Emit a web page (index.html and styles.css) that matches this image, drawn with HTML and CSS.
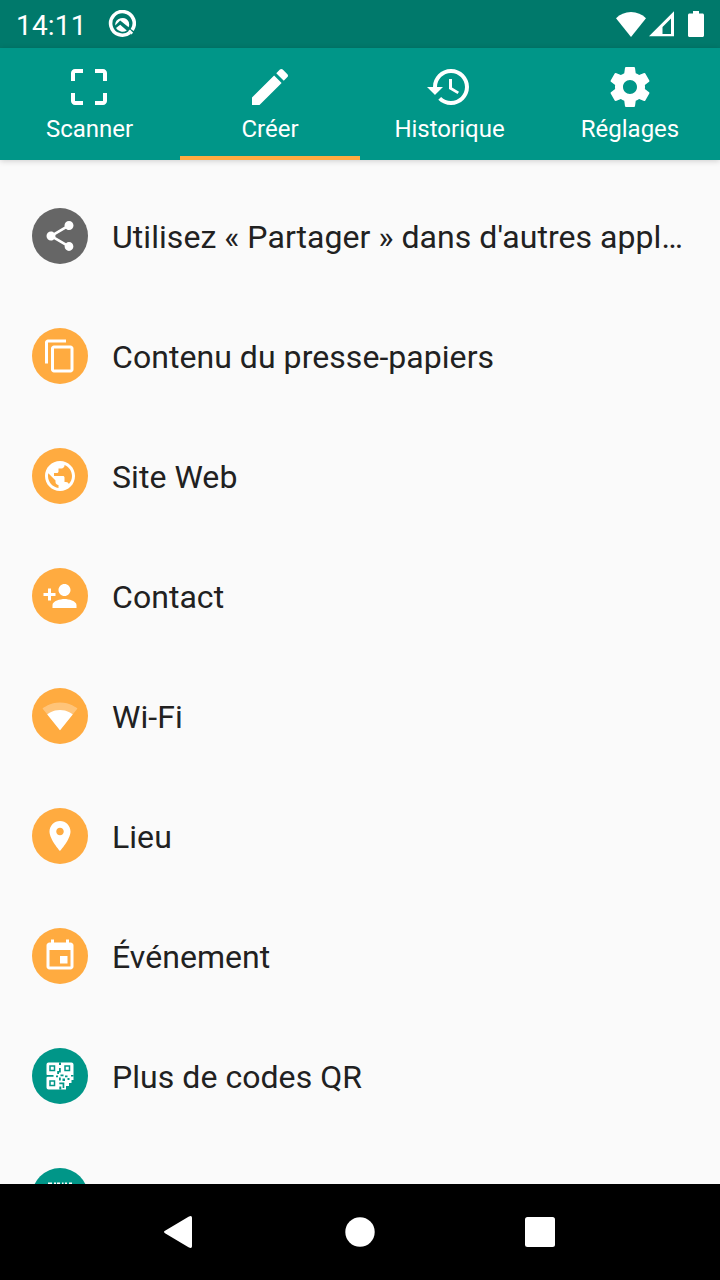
FILE: index.html
```html
<!DOCTYPE html>
<html lang="fr">
<head>
    <meta charset="UTF-8">
    <meta name="viewport" content="width=device-width, initial-scale=1.0">
    <title>Créer</title>
    <link rel="stylesheet" href="styles.css">
</head>
<body>
    <div class="status-bar">
        <span class="clock">14:11</span>
        <svg class="app-badge" viewBox="0 0 28 28">
            <path d="M21.8 22.6A11.8 11.8 0 1 1 24.2 20" fill="none" stroke="#fff" stroke-width="3.6"/>
            <path d="M7.2 15.5A7.2 7.2 0 0 1 20.8 12A7.5 7.5 0 0 1 20.6 17.2L12.2 10.6z" fill="#fff"/>
            <path d="M8 18l4.2-3.2 6.6 5.6A7.5 7.5 0 0 1 8 18z" fill="#fff"/>
            <path d="M21 20.4l3.2 3.2" stroke="#fff" stroke-width="2.6"/>
        </svg>
        <div class="status-icons">
            <svg width="30" height="25" viewBox="0 0 30 25"><path d="M15 25L0 6.2C4 2.3 9 0 15 0s11 2.3 15 6.2z"/></svg>
            <svg width="26" height="26" viewBox="0 0 26 26"><path fill-rule="evenodd" d="M0 25.3L25 .3v25zM13.5 16v7h8.500V7.600z"/></svg>
            <svg width="16" height="26" viewBox="0 0 16 26"><path d="M5 0h6v2.6h3.5c.8 0 1.5.7 1.5 1.5v20.4c0 .8-.7 1.5-1.5 1.5h-13C.7 26 0 25.300 0 24.500V4.100c0-.8.7-1.500 1.500-1.500H5z"/></svg>
        </div>
    </div>

    <nav class="tabs">
        <a class="tab tab-scan">
            <svg viewBox="0 0 24 24"><path d="M3 5v4h2V5h4V3H5c-1.100 0-2 .9-2 2zm2 10H3v4c0 1.100.9 2 2 2h4v-2H5v-4zm14 4h-4v2h4c1.100 0 2-.9 2-2v-4h-2v4zm0-16h-4v2h4v4h2V5c0-1.100-.9-2-2-2z"/></svg>
            <span>Scanner</span>
        </a>
        <a class="tab active">
            <svg viewBox="0 0 24 24"><path d="M3 17.250V21h3.750L17.810 9.940l-3.750-3.750L3 17.250zM20.710 7.040c.39-.39.39-1.020 0-1.410l-2.340-2.340c-.39-.39-1.020-.39-1.410 0l-1.830 1.830 3.750 3.750 1.830-1.830z"/></svg>
            <span>Créer</span>
        </a>
        <a class="tab tab-history">
            <svg viewBox="0 0 24 24"><path d="M13 3c-4.970 0-9 4.030-9 9H1l3.890 3.890.07.14L9 12H6c0-3.870 3.130-7 7-7s7 3.130 7 7-3.130 7-7 7c-1.930 0-3.680-.79-4.940-2.060l-1.420 1.420C8.270 19.990 10.510 21 13 21c4.970 0 9-4.030 9-9s-4.030-9-9-9zm-1 5v5l4.280 2.540.72-1.210-3.500-2.080V8H12z"/></svg>
            <span>Historique</span>
        </a>
        <a class="tab">
            <svg viewBox="0 0 24 24"><path d="M19.430 12.980c.04-.32.07-.64.07-.98s-.03-.66-.07-.98l2.110-1.650c.19-.15.24-.42.12-.64l-2-3.460c-.12-.22-.39-.3-.61-.22l-2.490 1c-.52-.4-1.080-.73-1.690-.98l-.38-2.650C14.460 2.180 14.250 2 14 2h-4c-.25 0-.46.18-.49.42l-.38 2.650c-.61.25-1.170.59-1.690.98l-2.490-1c-.23-.09-.49 0-.61.22l-2 3.460c-.13.22-.07.49.12.64l2.110 1.650c-.04.32-.07.65-.07.98s.03.66.07.98l-2.110 1.650c-.19.15-.24.42-.12.64l2 3.460c.12.22.39.3.61.22l2.490-1c.52.4 1.080.73 1.690.98l.38 2.650c.03.24.24.42.49.42h4c.25 0 .46-.18.49-.42l.38-2.650c.61-.25 1.170-.59 1.690-.98l2.490 1c.23.09.49 0 .61-.22l2-3.460c.12-.22.07-.49-.12-.64l-2.110-1.650zM12 15.500c-1.930 0-3.500-1.570-3.500-3.500s1.570-3.500 3.500-3.500 3.500 1.570 3.500 3.500-1.570 3.500-3.500 3.500z"/></svg>
            <span>Réglages</span>
        </a>
    </nav>

    <main class="list">
        <div class="item">
            <div class="icon grey"><svg viewBox="0 0 24 24"><path d="M18 16.080c-.76 0-1.440.3-1.960.77L8.910 12.700c.05-.23.09-.46.09-.7s-.04-.47-.09-.7l7.050-4.110c.54.5 1.250.81 2.040.81 1.660 0 3-1.340 3-3s-1.340-3-3-3-3 1.340-3 3c0 .24.04.47.09.7L8.040 9.810C7.500 9.310 6.790 9 6 9c-1.660 0-3 1.340-3 3s1.340 3 3 3c.79 0 1.500-.31 2.040-.81l7.120 4.160c-.05.21-.08.43-.08.65 0 1.610 1.310 2.920 2.920 2.920s2.920-1.310 2.920-2.920-1.310-2.920-2.920-2.920z"/></svg></div>
            <span class="label">Utilisez « Partager » dans d'autres appl…</span>
        </div>
        <div class="item">
            <div class="icon orange"><svg viewBox="0 0 24 24"><path d="M16 1H4c-1.100 0-2 .9-2 2v14h2V3h12V1zm3 4H8c-1.100 0-2 .9-2 2v14c0 1.100.9 2 2 2h11c1.100 0 2-.9 2-2V7c0-1.100-.9-2-2-2zm0 16H8V7h11v14z"/></svg></div>
            <span class="label">Contenu du presse-papiers</span>
        </div>
        <div class="item">
            <div class="icon orange"><svg viewBox="0 0 24 24"><path d="M12 2C6.480 2 2 6.480 2 12s4.480 10 10 10 10-4.480 10-10S17.520 2 12 2zm-1 17.930c-3.950-.49-7-3.850-7-7.930 0-.62.08-1.210.21-1.790L9 15v1c0 1.100.9 2 2 2v1.930zm6.900-2.540c-.26-.81-1-1.390-1.900-1.390h-1v-3c0-.55-.45-1-1-1H8v-2h2c.55 0 1-.45 1-1V7h2c1.100 0 2-.9 2-2v-.41c2.930 1.190 5 4.060 5 7.410 0 2.080-.8 3.970-2.100 5.390z"/></svg></div>
            <span class="label">Site Web</span>
        </div>
        <div class="item">
            <div class="icon orange"><svg viewBox="0 0 24 24"><path d="M15 12c2.210 0 4-1.790 4-4s-1.790-4-4-4-4 1.790-4 4 1.790 4 4 4zm-9-2V7H4v3H1v2h3v3h2v-3h3v-2H6zm9 4c-2.670 0-8 1.340-8 4v2h16v-2c0-2.660-5.330-4-8-4z"/></svg></div>
            <span class="label">Contact</span>
        </div>
        <div class="item">
            <div class="icon orange"><svg viewBox="0 0 24 24"><path fill-opacity=".3" d="M12.010 21.490L23.640 7c-.45-.34-4.930-4-11.640-4C5.280 3 .81 6.660.36 7l11.630 14.490.01.01.01-.01z"/><path d="M3.530 10.950l8.460 10.540.01.01.01-.01 8.460-10.540C20.040 10.620 16.810 8 12 8c-4.810 0-8.040 2.620-8.470 2.950z"/></svg></div>
            <span class="label">Wi-Fi</span>
        </div>
        <div class="item">
            <div class="icon orange"><svg viewBox="0 0 24 24"><path d="M12 2C8.130 2 5 5.130 5 9c0 5.250 7 13 7 13s7-7.750 7-13c0-3.870-3.130-7-7-7zm0 9.500c-1.380 0-2.500-1.120-2.500-2.500s1.120-2.500 2.500-2.500 2.500 1.120 2.500 2.500-1.120 2.500-2.500 2.500z"/></svg></div>
            <span class="label">Lieu</span>
        </div>
        <div class="item">
            <div class="icon orange"><svg viewBox="0 0 24 24"><path d="M17 12h-5v5h5v-5zM16 1v2H8V1H6v2H5c-1.110 0-1.990.9-1.990 2L3 19c0 1.100.89 2 2 2h14c1.100 0 2-.9 2-2V5c0-1.100-.9-2-2-2h-1V1h-2zm3 18H5V8h14v11z"/></svg></div>
            <span class="label">Événement</span>
        </div>
        <div class="item">
            <div class="icon teal">
                <svg viewBox="0 0 36 36">
                    <path d="M6.500 4.500H29.500q2 0 2 2V22H29.500v3H27v3h-3v3.500H6.500q-2 0-2-2V20q0-1.500 1.500-2-1.500-.5-1.500-2V6.500q0-2 2-2z"/>
                    <!-- finder squares -->
                    <g class="qr-ring">
                        <rect x="8" y="8" width="4.500" height="4.500"/>
                        <rect x="23" y="8" width="4.500" height="4.500"/>
                        <rect x="8" y="23" width="4.500" height="4.500"/>
                    </g>
                    <!-- gaps between modules -->
                    <path class="qr-gap" d="M17 4.500h2v2.500h-2zM17 10h1.800v4.500H17zM15.200 13h1.800v3h-1.800zM4.500 17h7v1.800h-7zM14 17.500h2v1.800h-2zM18.500 16.500h3v1.800h-3zM23 17.500h2.500v1.800H23zM17 19.500h1.800v3H17zM20.500 20.500h2.500v2.500h-2.500zM25.500 20h2v2h-2zM17.300 24.500h5v1.700h-5zM20.600 26h1.700v4h-1.700zM17.300 28.500h2v3h-2zM29 17h2.500v1.500H29z"/>
                </svg>
            </div>
            <span class="label">Plus de codes QR</span>
        </div>
        <div class="item">
            <div class="icon teal"><svg viewBox="0 0 36 36"><path d="M6 4.500h4v2H8v3H6zM12 4.500h2v27h-2zM15 4.500h3v27h-3zM20 4.500h1.500v27H20zM23 4.500h2v27h-2zM27 4.500h3v5h-2v-3h-1z"/></svg></div>
        </div>
    </main>

    <footer class="nav-bar">
        <svg viewBox="0 0 32 32"><path d="M3 14.800L26.500 .8q3.500-1.800 3.500 1V30.200q0 2.800-3.500 1L3 17.200q-2-1.200 0-2.400z"/></svg>
        <svg viewBox="0 0 32 32"><circle cx="17" cy="16" r="14.700"/></svg>
        <svg viewBox="0 0 32 32"><rect x="1" y="1" width="30" height="30" rx="2.500"/></svg>
    </footer>
</body>
</html>
```

FILE: styles.css
```css
body {
    margin: 0;
    height: 1280px;
    display: flex;
    flex-direction: column;
    overflow: hidden;
    font-family: Roboto, sans-serif;
    background-color: #fafafa;
}
svg {
    display: block;
    fill: #fff;
}
.status-bar {
    height: 48px;
    flex: none;
    box-sizing: border-box;
    padding: 0 16px;
    display: flex;
    align-items: center;
    background-color: #00796b;
    color: #fff;
}
.clock {
    width: 92px;
    font-size: 28px;
    line-height: 48px;
    padding-top: 3px;
    letter-spacing: 0.2px;
}
.app-badge {
    width: 28px;
    height: 28px;
}
.status-icons {
    margin-left: auto;
    display: flex;
    align-items: center;
}
.status-icons svg + svg {
    margin-left: 3px;
}
.status-icons svg:last-child {
    margin-left: 13px;
}
.tabs {
    height: 112px;
    flex: none;
    display: grid;
    grid-template-columns: repeat(4, 1fr);
    background-color: #009688;
    box-shadow: 0 1px 6px rgba(0, 0, 0, 0.18);
    z-index: 1;
}
.tab {
    box-sizing: border-box;
    padding-top: 15px;
    display: flex;
    flex-direction: column;
    align-items: center;
    border-bottom: 4px solid transparent;
    color: #fff;
    font-size: 24px;
    line-height: 36px;
}
.tab.active {
    border-bottom-color: #ffab40;
}
.tab svg {
    width: 48px;
    height: 48px;
}
.tab-scan {
    padding-right: 1px;
}
.tab-scan svg {
    margin-right: 1px;
}
.tab-history {
    padding-right: 1px;
}
.tab-history svg {
    margin-right: 1px;
}
.list {
    flex: 1;
    min-height: 0;
    overflow: hidden;
    padding-top: 16px;
}
.item {
    height: 120px;
    box-sizing: border-box;
    padding: 0 32px;
    display: flex;
    align-items: center;
    gap: 24px;
}
.icon {
    width: 56px;
    height: 56px;
    flex: none;
    display: flex;
    align-items: center;
    justify-content: center;
    border-radius: 50%;
}
.icon svg {
    width: 36px;
    height: 36px;
}
.grey {
    background-color: #666;
}
.orange {
    background-color: #ffab40;
}
.teal {
    background-color: #009688;
}
.qr-ring {
    fill: #fff;
    stroke: #009688;
    stroke-width: 1.5;
}
.qr-gap {
    fill: #009688;
}
.label {
    white-space: nowrap;
    font-size: 32px;
    line-height: 44px;
    letter-spacing: 0.05px;
    padding-top: 2px;
    color: #212121;
}
.nav-bar {
    height: 96px;
    flex: none;
    box-sizing: border-box;
    padding: 0 162px;
    display: flex;
    align-items: center;
    justify-content: space-between;
    background-color: #000;
}
.nav-bar svg {
    width: 32px;
    height: 32px;
}
.nav-bar svg:last-child {
    margin-right: 2px;
}
```
